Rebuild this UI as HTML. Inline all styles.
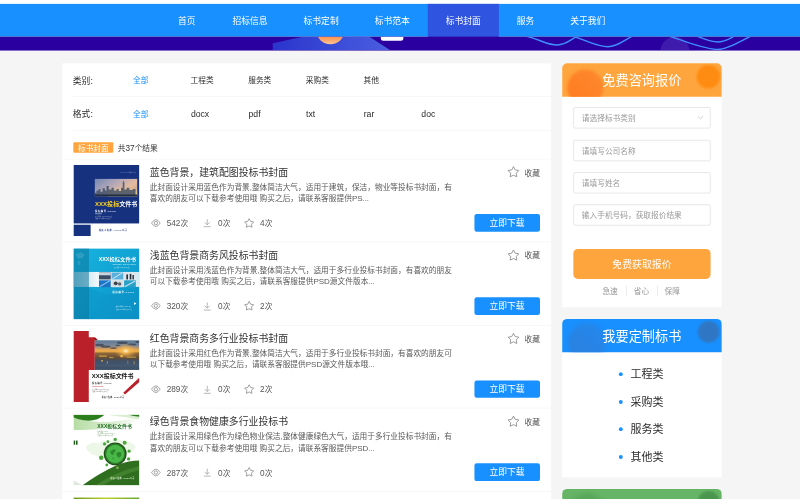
<!DOCTYPE html>
<html lang="zh-CN">
<head>
<meta charset="utf-8">
<title>标书封面</title>
<style>
*{box-sizing:border-box;margin:0;padding:0}
html,body{width:800px;height:499px;overflow:hidden;background:#f5f5f5}
body{font-family:"Liberation Sans","Noto Sans CJK SC",sans-serif;color:#333}
#stage{position:absolute;left:0;top:0;width:1440px;height:899px;transform:scale(0.555556);transform-origin:0 0;background:#f5f5f5;overflow:hidden}
.abs{position:absolute}
#topbar{left:0;top:0;width:1440px;height:7px;background:#fff}
#nav{left:0;top:6.8px;width:1440px;height:59.4px;background:#1890ff}
#nav a{position:absolute;top:0;height:59.8px;line-height:62.5px;color:#fff;font-size:15.8px;text-align:center;text-decoration:none;white-space:nowrap}
#nav a.on{background:#2f54df}
#banner{left:0;top:66.2px;width:1440px;height:24.8px;background:#2a00a0;overflow:hidden}
#main{left:112.1px;top:114.3px;width:880px;height:800px;background:#fff}
.frow{position:absolute;left:19px;width:861px;border-bottom:1px solid #f0f0f0}
.frow span{position:absolute;top:0;line-height:63px;font-size:13.85px;color:#2b2b2b;white-space:nowrap}
.frow span.lb{font-size:15.8px;left:0}
.frow span.on{color:#1890ff}
.frow span.en{font-size:15.600px;margin-left:0.500px}
#tagrow{left:0;top:121.500px;width:880px;height:51px;border-bottom:1px solid #f3f3f3}
#tag{left:19.900px;top:20px;width:72px;height:19.5px;background:#ffa53d;border-radius:2px;color:#fff;font-size:13.85px;line-height:20.5px;text-align:center}
#cnt b{font-weight:400;font-size:14.800px}
#cnt{left:100px;top:20px;font-size:13.85px;line-height:20.5px;color:#333;white-space:nowrap}
.item{position:absolute;left:0;width:880px;height:149.6px;border-bottom:1px solid #f0f0f0}
.item .thumb{position:absolute;left:19.900px;top:10.5px;width:119.500px;height:128px;overflow:hidden}
.item .thumb svg{display:block}
.item h3{position:absolute;left:157.5px;top:10.5px;font-size:17.8px;font-weight:400;line-height:26px;color:#333;white-space:nowrap}
.item p{position:absolute;left:157.5px;top:40.800px;width:600px;font-size:13.85px;line-height:20px;color:#595959;white-space:nowrap}
.item p b{font-weight:400;font-size:14.400px}
.item .st b{font-weight:400;font-size:14.800px}
.item .st{position:absolute;top:105.400px;height:20px;line-height:20px;font-size:13.85px;color:#555;white-space:nowrap}
.item svg.ic{position:absolute;overflow:visible}
.item .fav{position:absolute;left:832px;top:11.300px;font-size:13.85px;line-height:26px;color:#555;white-space:nowrap}
.item .btn{position:absolute;left:741.5px;top:99px;width:118px;height:31.5px;background:#1890ff;border-radius:4px;color:#fff;font-size:15.8px;line-height:32.5px;text-align:center}
.side{position:absolute;left:1011.8px;width:287px;background:#fff}
.shead{position:absolute;left:0;top:0;width:287px;height:60px;border-radius:9px 9px 0 0;overflow:hidden;color:#fff;font-size:23.7px;line-height:63px;text-align:center}
.shead i{position:absolute;border-radius:50%;display:block}
.shead b{position:relative;font-weight:400}
.inp{position:absolute;left:20px;width:247.500px;height:38px;border:1px solid #d4d4d4;border-radius:3px;font-size:13.85px;line-height:39px;color:#999;padding-left:14.5px;white-space:nowrap;background:#fff}
#qbtn{left:20px;top:334px;width:247.500px;height:53.5px;background:#ffa53d;border-radius:8px;color:#fff;font-size:17.8px;line-height:57px;text-align:center}
.slog{position:absolute;top:398.300px;font-size:13.85px;line-height:22px;color:#999;white-space:nowrap}
.sep{position:absolute;top:400px;width:1px;height:18px;background:#ddd}
.li{position:absolute;left:123px;font-size:19.75px;line-height:30px;color:#2b2b2b;white-space:nowrap}
.dot{position:absolute;left:102px;width:7px;height:7px;border-radius:50%;background:#1890ff}
</style>
</head>
<body>
<div id="stage">
<div id="topbar" class="abs"></div>
<div id="nav" class="abs">
<a style="left:288px;width:96px">首页</a>
<a style="left:386px;width:128px">招标信息</a>
<a style="left:514px;width:128px">标书定制</a>
<a style="left:642px;width:128px">标书范本</a>
<a class="on" style="left:770px;width:128px">标书封面</a>
<a style="left:898px;width:96px">服务</a>
<a style="left:994px;width:128px">关于我们</a>
</div>
<div id="banner" class="abs">
<svg width="1440" height="24" viewBox="0 0 1440 24" style="display:block">
<defs><linearGradient id="bp" x1="0" y1="0" x2="1" y2="0"><stop offset="0" stop-color="#2a35cc"/><stop offset="1" stop-color="#4a5ee0"/></linearGradient>
<linearGradient id="bo" gradientUnits="userSpaceOnUse" x1="0" y1="-2" x2="0" y2="14"><stop offset="0" stop-color="#ff8a3d"/><stop offset="1" stop-color="#ffc59a"/></linearGradient></defs>
<polygon points="491,24 491,12 545,0 665,0 702,24" fill="url(#bp)"/>
<circle cx="594.700" cy="-11.700" r="25.400" fill="url(#bo)"/>
<rect x="685.500" y="-8" width="40.500" height="15.500" rx="4.500" fill="#fff"/>
<path d="M947,-1 C975,6 985,15 1003,15 C1020,15 1028,4 1040,-1" fill="none" stroke="#3f8fff" stroke-width="2.600"/>
<path d="M1030,-1 C1060,8 1075,18 1094,18 C1112,18 1124,6 1138,-1" fill="none" stroke="#3f8fff" stroke-width="2.600"/>
<circle cx="1215" cy="26" r="26" fill="#8a80e0" opacity="0.210"/>
<path d="M1204,-1 C1245,12 1270,23 1292,23 C1312,23 1332,8 1352,-1" fill="none" stroke="#3f8fff" stroke-width="2.600"/>
<path d="M1254,-1 C1270,5 1280,9.500 1292,9.500 C1304,9.500 1312,4 1322,-1" fill="none" stroke="#3f8fff" stroke-width="2.600"/>
</svg>
</div>

<div id="main" class="abs">
<div class="frow" style="top:0;height:60px">
<span class="lb">类别:</span>
<span class="on" style="left:108.3px">全部</span>
<span style="left:212.0px">工程类</span>
<span style="left:315.7px">服务类</span>
<span style="left:419.4px">采购类</span>
<span style="left:523.1px">其他</span>
</div>
<div class="frow" style="top:60px;height:61.500px">
<span class="lb">格式:</span>
<span class="on" style="left:108.3px">全部</span>
<span style="left:212.0px" class="en">docx</span>
<span style="left:315.7px" class="en">pdf</span>
<span style="left:419.4px" class="en">txt</span>
<span style="left:523.1px" class="en">rar</span>
<span style="left:626.8px" class="en">doc</span>
</div>
<div id="tagrow" class="abs">
<div id="tag" class="abs">标书封面</div>
<div id="cnt" class="abs">共<b>37</b>个结果</div>
</div>
<div class="item" style="top:172.2px">
<div class="thumb"><svg width="119.500" height="128" viewBox="0 0 119 128" preserveAspectRatio="none">
<defs>
<linearGradient id="sky1" x1="0" y1="0" x2="1" y2="0.600"><stop offset="0" stop-color="#7288b4"/><stop offset="0.450" stop-color="#b4a8b8"/><stop offset="0.800" stop-color="#e6bca0"/><stop offset="1" stop-color="#c9a58e"/></linearGradient>
<linearGradient id="gl1" x1="0" y1="0" x2="0" y2="1"><stop offset="0" stop-color="#f2d28a" stop-opacity="0"/><stop offset="0.600" stop-color="#f2d28a" stop-opacity="0.550"/><stop offset="1" stop-color="#e8c070" stop-opacity="0.900"/></linearGradient>
</defs>
<rect width="119" height="128" fill="#fff"/>
<rect width="119" height="105.200" fill="#16327f"/>
<rect x="0" y="107.500" width="31" height="20.500" fill="#16327f"/>
<rect x="38.500" y="25" width="76" height="31.300" fill="url(#sky1)"/>
<rect x="62" y="40" width="52.500" height="16.300" fill="url(#gl1)"/>
<path d="M38.500,56.300 V50 h3 v-4 h4 v-3 h3 v5 h4 v-6 h4 v4 h3 v-8 h4 v6 h5 v-3 h4 v5 h5 v-3 h4 v4 h4 v-6 h3 v-9 l1.500,-4 l1.500,4 v12 h4 v-3 h5 v4 h6 v-2 h5 V56.300 Z" fill="#3a4a63" opacity="0.800"/>
<path d="M38.500,56.300 V53 h76 V56.300 Z" fill="#1f2c44"/>
<text x="39" y="74.500" font-family="'Liberation Sans','Noto Sans CJK SC',sans-serif" font-size="10" font-weight="700" fill="#ffd21f" textLength="75.500" lengthAdjust="spacingAndGlyphs">XXX投标<tspan fill="#fff">文件书</tspan></text>
<text x="39" y="84" font-family="'Liberation Sans','Noto Sans CJK SC',sans-serif" font-size="4.200" font-weight="700" fill="#fff" letter-spacing="1">投标编号:XXXX</text>
<rect x="39" y="87.500" width="12" height="0.900" fill="#fff"/>
<text x="39" y="94" font-family="'Liberation Sans','Noto Sans CJK SC',sans-serif" font-size="2.600" fill="#c8d0e8">项目名称: XXXXXXXX项目</text>
<text x="39" y="97.500" font-family="'Liberation Sans','Noto Sans CJK SC',sans-serif" font-size="2.600" fill="#c8d0e8">日期: XXXX年XX月XX日</text>
<text x="84" y="14" font-family="'Liberation Sans','Noto Sans CJK SC',sans-serif" font-size="3" fill="#8f9fd0">XXXXXXXX有限公司</text>
<text x="46" y="119.500" font-family="'Liberation Sans','Noto Sans CJK SC',sans-serif" font-size="3.800" font-weight="700" fill="#16327f" letter-spacing="0.900">投标人名称: XXXX公司</text>
</svg></div>
<h3>蓝色背景，建筑配图投标书封面</h3>
<p>此封面设计采用蓝色作为背景,整体简洁大气，适用于建筑，保洁，物业等投标书封面，有<br>喜欢的朋友可以下载参考使用哦 购买之后，请联系客服提供<b>PS</b>...</p>
<svg class="ic" style="left:160px;top:107.4px" width="17" height="15" viewBox="0 0 17 15"><path d="M0.700,7.500 Q8.500,-4.700 16.300,7.500 Q8.500,19.700 0.700,7.500 Z" fill="none" stroke="#858585" stroke-width="1.300"/><circle cx="8.500" cy="7.500" r="3" fill="none" stroke="#858585" stroke-width="1.300"/></svg><span class="st" style="left:188px"><b>542</b>次</span>
<svg class="ic" style="left:253.5px;top:107.9px" width="14" height="15" viewBox="0 0 14 15"><path d="M7,0.500 V10.500 M2.500,6.300 L7,10.800 L11.500,6.300 M0.800,14 H13.200" fill="none" stroke="#9a9a9a" stroke-width="1.300"/></svg><span class="st" style="left:280.500px"><b>0</b>次</span>
<svg class="ic" style="left:326.5px;top:105.2px" width="19" height="19" viewBox="0 0 20 20"><path d="M10.00,1.70 L12.76,6.90 L18.56,7.92 L14.47,12.15 L15.29,17.98 L10.00,15.40 L4.71,17.98 L5.53,12.15 L1.44,7.92 L7.24,6.90 Z" fill="none" stroke="#858585" stroke-width="1.45" stroke-linejoin="round"/></svg><span class="st" style="left:356px"><b>4</b>次</span>
<svg class="ic" style="left:801px;top:12px" width="22.5" height="22.5" viewBox="0 0 20 20"><path d="M10.00,1.70 L12.76,6.90 L18.56,7.92 L14.47,12.15 L15.29,17.98 L10.00,15.40 L4.71,17.98 L5.53,12.15 L1.44,7.92 L7.24,6.90 Z" fill="none" stroke="#858585" stroke-width="1.3" stroke-linejoin="round"/></svg><span class="fav">收藏</span>
<div class="btn">立即下载</div>
</div>
<div class="item" style="top:321.8px">
<div class="thumb"><svg width="119.500" height="128" viewBox="0 0 119 128" preserveAspectRatio="none">
<defs>
<linearGradient id="cy2" x1="0" y1="0" x2="1" y2="1"><stop offset="0" stop-color="#19b4e0"/><stop offset="0.5" stop-color="#10a3d3"/><stop offset="1" stop-color="#0a8cc2"/></linearGradient>
<linearGradient id="bd2" x1="0" y1="0" x2="1" y2="0"><stop offset="0" stop-color="#9fd4e6"/><stop offset="0.35" stop-color="#eef6f9"/><stop offset="1" stop-color="#d5ebf2"/></linearGradient>
</defs>
<rect width="119" height="128" fill="url(#cy2)"/>
<path d="M27,70 Q70,95 119,72 V128 H27 Z" fill="#0b93c8" opacity="0.5"/>
<rect x="0" y="42.500" width="119" height="27" fill="url(#bd2)"/>
<rect x="0" y="0" width="28" height="128" fill="#0a7298" opacity="0.520"/>
<path d="M4,10 l10,-3 l6,4 l-3,6 l-7,2 l-4,-4 Z M8,22 l5,2 l-1,7 l-4,-3 Z" fill="#fff" opacity="0.12"/>
<rect x="46" y="43.5" width="21" height="12.5" fill="#3a4c66"/><rect x="46" y="43.500" width="21" height="5" fill="#c9d3dd"/>
<rect x="68.500" y="43.500" width="21" height="12.500" fill="#5ab0dc"/><path d="M70,55 L88,44" stroke="#e8f4fa" stroke-width="1.500"/>
<rect x="91" y="43.500" width="21" height="12.500" fill="#dfe6ea"/><rect x="95" y="47" width="3" height="9" fill="#26303c"/><rect x="101" y="46" width="3" height="10" fill="#26303c"/><rect x="106" y="48" width="2.500" height="8" fill="#26303c"/>
<rect x="46" y="57.500" width="21" height="12.500" fill="#1d74c4"/><path d="M47,69 L66,58" stroke="#7fc0ee" stroke-width="2"/>
<rect x="68.500" y="57.500" width="21" height="12.500" fill="#d9dfe2"/><circle cx="76" cy="63" r="3.500" fill="#39424d"/><circle cx="83" cy="64" r="3" fill="#59626c"/>
<rect x="91" y="57.500" width="21" height="12.500" fill="#2aa0c8"/><path d="M92,69 L111,59" stroke="#bfe6f2" stroke-width="2"/>
<text x="45.500" y="23" font-family="'Liberation Sans','Noto Sans CJK SC',sans-serif" font-size="8.600" font-weight="700" fill="#fff" textLength="67" lengthAdjust="spacingAndGlyphs">XXX投标文件书</text>
<text x="70" y="30" font-family="'Liberation Sans',sans-serif" font-size="3.400" fill="#e4f4fa" textLength="42.500">TENDER DOCUMENT</text>
<text x="70" y="35.500" font-family="'Liberation Sans','Noto Sans CJK SC',sans-serif" font-size="2.400" fill="#d4eef7">— 项目名称: XXXXXXXX项目 —</text>
<text x="70" y="81" font-family="'Liberation Sans','Noto Sans CJK SC',sans-serif" font-size="4.200" font-weight="700" fill="#fff" letter-spacing="1.200">投标编号:XXXX</text>
<path d="M109,97 l4,2.500 l-4,2.500 Z" fill="#fff"/>
<text x="76" y="106.500" font-family="'Liberation Sans','Noto Sans CJK SC',sans-serif" font-size="2.600" fill="#e4f4fa">投标人名称: XXXX公司</text>
<text x="76" y="111" font-family="'Liberation Sans','Noto Sans CJK SC',sans-serif" font-size="2.600" fill="#e4f4fa">日期: XXXX年XX月XX日</text>
</svg></div>
<h3>浅蓝色背景商务风投标书封面</h3>
<p>此封面设计采用浅蓝色作为背景,整体简洁大气，适用于多行业投标书封面，有喜欢的朋友<br>可以下载参考使用哦 购买之后，请联系客服提供<b>PSD</b>源文件版本...</p>
<svg class="ic" style="left:160px;top:107.4px" width="17" height="15" viewBox="0 0 17 15"><path d="M0.700,7.500 Q8.500,-4.700 16.300,7.500 Q8.500,19.700 0.700,7.500 Z" fill="none" stroke="#858585" stroke-width="1.300"/><circle cx="8.500" cy="7.500" r="3" fill="none" stroke="#858585" stroke-width="1.300"/></svg><span class="st" style="left:188px"><b>320</b>次</span>
<svg class="ic" style="left:253.5px;top:107.9px" width="14" height="15" viewBox="0 0 14 15"><path d="M7,0.500 V10.500 M2.500,6.300 L7,10.800 L11.500,6.300 M0.800,14 H13.200" fill="none" stroke="#9a9a9a" stroke-width="1.300"/></svg><span class="st" style="left:280.500px"><b>0</b>次</span>
<svg class="ic" style="left:326.5px;top:105.2px" width="19" height="19" viewBox="0 0 20 20"><path d="M10.00,1.70 L12.76,6.90 L18.56,7.92 L14.47,12.15 L15.29,17.98 L10.00,15.40 L4.71,17.98 L5.53,12.15 L1.44,7.92 L7.24,6.90 Z" fill="none" stroke="#858585" stroke-width="1.45" stroke-linejoin="round"/></svg><span class="st" style="left:356px"><b>2</b>次</span>
<svg class="ic" style="left:801px;top:12px" width="22.5" height="22.5" viewBox="0 0 20 20"><path d="M10.00,1.70 L12.76,6.90 L18.56,7.92 L14.47,12.15 L15.29,17.98 L10.00,15.40 L4.71,17.98 L5.53,12.15 L1.44,7.92 L7.24,6.90 Z" fill="none" stroke="#858585" stroke-width="1.3" stroke-linejoin="round"/></svg><span class="fav">收藏</span>
<div class="btn">立即下载</div>
</div>
<div class="item" style="top:471.4px">
<div class="thumb"><svg width="119.500" height="128" viewBox="0 0 119 128" preserveAspectRatio="none">
<defs>
<linearGradient id="sk3" x1="0" y1="0" x2="0" y2="1"><stop offset="0" stop-color="#5f7a98"/><stop offset="0.180" stop-color="#7d8797"/><stop offset="0.300" stop-color="#d9a05a"/><stop offset="0.370" stop-color="#f3b24a"/><stop offset="0.440" stop-color="#8e6636"/><stop offset="0.600" stop-color="#5f4c36"/><stop offset="0.700" stop-color="#3f5068"/><stop offset="1" stop-color="#4a6078"/></linearGradient>
<radialGradient id="sun3" cx="0.690" cy="0.360" r="0.260"><stop offset="0" stop-color="#fff6d8"/><stop offset="0.300" stop-color="#fbbf55" stop-opacity="0.850"/><stop offset="1" stop-color="#f0a23c" stop-opacity="0"/></radialGradient>
<filter id="bl3" x="-20%" y="-50%" width="140%" height="200%"><feGaussianBlur stdDeviation="0.700"/></filter>
</defs>
<rect width="119" height="128" fill="#fff"/>
<path d="M0,0 H27.700 V11 H38.500 L44,16.500 H38.500 V69.800 H27.700 V128 H0 Z" fill="#b9202a"/>
<path d="M38.500,11 L44,16.500 H38.500 Z" fill="#8a181e"/>
<rect x="38.500" y="16.500" width="80.500" height="53.300" fill="url(#sk3)"/>
<g fill="#2c3344" opacity="0.620" filter="url(#bl3)">
<ellipse cx="47" cy="25" rx="8" ry="2.200"/><ellipse cx="58" cy="28" rx="9" ry="2"/><ellipse cx="72" cy="30.500" rx="6" ry="1.600"/>
<ellipse cx="88" cy="21" rx="10" ry="2.400"/><ellipse cx="105" cy="24" rx="8" ry="1.800"/><ellipse cx="115" cy="19.500" rx="4" ry="1.800"/><ellipse cx="80" cy="26" rx="5" ry="1.400"/>
</g>
<rect x="38.500" y="16.500" width="80.500" height="53.300" fill="url(#sun3)"/>
<g fill="#f7c24f" opacity="0.750" filter="url(#bl3)"><rect x="46" y="44" width="14" height="2"/><rect x="64" y="47" width="8" height="1.500"/><rect x="84" y="43" width="5" height="4"/><rect x="96" y="46" width="16" height="1.600"/><rect x="50" y="52" width="3" height="3"/><rect x="108" y="54" width="2" height="6" opacity="0.600"/><rect x="60" y="54" width="2" height="5" opacity="0.600"/><rect x="97" y="53" width="1.500" height="6" opacity="0.600"/></g>
<rect x="38.500" y="64" width="80.500" height="5.800" fill="#3d4e63" opacity="0.700"/>
<text x="33" y="84.800" font-family="'Liberation Sans','Noto Sans CJK SC',sans-serif" font-size="10.500" font-weight="700" fill="#151515" textLength="75" lengthAdjust="spacingAndGlyphs">XXX投标文件书</text>
<text x="33.500" y="95.500" font-family="'Liberation Sans','Noto Sans CJK SC',sans-serif" font-size="4" font-weight="700" fill="#333" letter-spacing="0.900">投标编号:XXXX</text>
<rect x="33.500" y="99" width="20" height="0.800" fill="#c9434b"/>
<text x="33.500" y="105.500" font-family="'Liberation Sans','Noto Sans CJK SC',sans-serif" font-size="2.600" fill="#444">项目名称: XXXXXXXX项目</text>
<text x="33.500" y="109" font-family="'Liberation Sans','Noto Sans CJK SC',sans-serif" font-size="2.600" fill="#444">日期: XXXX年XX月XX日</text>
<path d="M119,83 V91 L92.500,114 L89.500,111 Z" fill="#b9202a"/>
<text x="51" y="121" font-family="'Liberation Sans','Noto Sans CJK SC',sans-serif" font-size="3.400" font-weight="700" fill="#222" letter-spacing="0.400">投标人名称: XXXX公司</text>
</svg></div>
<h3>红色背景商务多行业投标书封面</h3>
<p>此封面设计采用红色作为背景,整体简洁大气，适用于多行业投标书封面，有喜欢的朋友可<br>以下载参考使用哦 购买之后，请联系客服提供<b>PSD</b>源文件版本哦...</p>
<svg class="ic" style="left:160px;top:107.4px" width="17" height="15" viewBox="0 0 17 15"><path d="M0.700,7.500 Q8.500,-4.700 16.300,7.500 Q8.500,19.700 0.700,7.500 Z" fill="none" stroke="#858585" stroke-width="1.300"/><circle cx="8.500" cy="7.500" r="3" fill="none" stroke="#858585" stroke-width="1.300"/></svg><span class="st" style="left:188px"><b>289</b>次</span>
<svg class="ic" style="left:253.5px;top:107.9px" width="14" height="15" viewBox="0 0 14 15"><path d="M7,0.500 V10.500 M2.500,6.300 L7,10.800 L11.500,6.300 M0.800,14 H13.200" fill="none" stroke="#9a9a9a" stroke-width="1.300"/></svg><span class="st" style="left:280.500px"><b>0</b>次</span>
<svg class="ic" style="left:326.5px;top:105.2px" width="19" height="19" viewBox="0 0 20 20"><path d="M10.00,1.70 L12.76,6.90 L18.56,7.92 L14.47,12.15 L15.29,17.98 L10.00,15.40 L4.71,17.98 L5.53,12.15 L1.44,7.92 L7.24,6.90 Z" fill="none" stroke="#858585" stroke-width="1.45" stroke-linejoin="round"/></svg><span class="st" style="left:356px"><b>2</b>次</span>
<svg class="ic" style="left:801px;top:12px" width="22.5" height="22.5" viewBox="0 0 20 20"><path d="M10.00,1.70 L12.76,6.90 L18.56,7.92 L14.47,12.15 L15.29,17.98 L10.00,15.40 L4.71,17.98 L5.53,12.15 L1.44,7.92 L7.24,6.90 Z" fill="none" stroke="#858585" stroke-width="1.3" stroke-linejoin="round"/></svg><span class="fav">收藏</span>
<div class="btn">立即下载</div>
</div>
<div class="item" style="top:621.0px">
<div class="thumb"><svg width="119.500" height="128" viewBox="0 0 119 128" preserveAspectRatio="none">
<defs>
<linearGradient id="lg4" x1="0" y1="0" x2="1" y2="0"><stop offset="0" stop-color="#a9d694"/><stop offset="0.7" stop-color="#dff0d6"/><stop offset="1" stop-color="#ffffff"/></linearGradient>
</defs>
<rect width="119" height="128" fill="#fff"/>
<path d="M0,3 Q40,24 119,4 V12 Q60,30 0,28 Z" fill="url(#lg4)" opacity="0.850"/><path d="M56,0 H119 V9 Q90,4 56,0 Z" fill="#cfe8c5" opacity="0.800"/>
<path d="M0,0 H56.500 Q44,11 27,11.300 Q10,10 0,5 Z" fill="#2c7d1c"/>
<path d="M97.500,0 H119 V4 Q108,3.500 97.500,0 Z" fill="#2c7d1c"/>
<path d="M22,58 q10,-10 24,-6 q8,-8 22,-4 q14,-6 26,0 q12,2 18,10 q-6,12 -18,14 q-10,8 -26,4 q-16,6 -28,-2 q-14,-4 -18,-16 Z" fill="#e4f3dc" opacity="0.650"/>
<text x="43" y="25" font-family="'Liberation Sans','Noto Sans CJK SC',sans-serif" font-size="8.800" font-weight="700" fill="#1f6b1f" textLength="62" lengthAdjust="spacingAndGlyphs">XXX投标文件书</text>
<text x="43.500" y="31.500" font-family="'Liberation Sans','Noto Sans CJK SC',sans-serif" font-size="2.600" fill="#3a7a3a">投标编号: XXXX</text>
<text x="43.500" y="35" font-family="'Liberation Sans','Noto Sans CJK SC',sans-serif" font-size="2.600" fill="#3a7a3a">项目名称: XXXXXXXX项目</text>
<text x="43.500" y="38.500" font-family="'Liberation Sans','Noto Sans CJK SC',sans-serif" font-size="2.600" fill="#3a7a3a">日期: XXXX年XX月XX日</text>
<rect x="0" y="47" width="3" height="7.500" fill="#1f5a1a"/><rect x="4.500" y="47" width="3" height="7.500" fill="#1f5a1a"/>
<g fill="#4aa53a">
<circle cx="50" cy="78" r="4"/><circle cx="56" cy="53" r="3"/><circle cx="62" cy="49" r="2.500"/><circle cx="75" cy="45" r="3"/><circle cx="92" cy="51" r="3.500"/><circle cx="100" cy="66" r="3"/><circle cx="99" cy="80" r="3"/><circle cx="60" cy="91" r="2.500"/>
</g>
<path d="M0,128 L0,118 L16,128 Z" fill="#dfe8dc"/><path d="M16,128 Q44,107 78.500,91 Q100,83 119,83 V128 Z" fill="#2f6e1e"/>
<path d="M39,128 Q75,104 119,93 V100 Q82,110 52,128 Z" fill="#5c9a40" opacity="0.450"/>
<circle cx="75" cy="71" r="20.500" fill="#1d4f17"/>
<circle cx="75" cy="71" r="18.500" fill="#2f7a26"/>
<circle cx="75" cy="71" r="16.300" fill="#49b848"/>
<path d="M66,68 q3,-6 9,-5 q2,3 -1,5 q-3,1 -2,4 q-3,3 -6,-4 Z M77,70 q5,-4 9,-1 q1,6 -4,9 q-4,-1 -5,-8 Z M70,77 q3,1 3,4 q-3,1 -3,-4 Z" fill="#2c8a2c"/>
<circle cx="79" cy="96" r="2.500" fill="#7fae4a"/>
<text x="66.500" y="116.500" font-family="'Liberation Sans','Noto Sans CJK SC',sans-serif" font-size="3.600" font-weight="700" fill="#e8f5e0" letter-spacing="0.500">投标人名称: XXXX公司</text>
</svg></div>
<h3>绿色背景食物健康多行业投标书</h3>
<p>此封面设计采用绿色作为绿色物业保洁,整体健康绿色大气，适用于多行业投标书封面，有<br>喜欢的朋友可以下载参考使用哦 购买之后，请联系客服提供<b>PSD</b>...</p>
<svg class="ic" style="left:160px;top:107.4px" width="17" height="15" viewBox="0 0 17 15"><path d="M0.700,7.500 Q8.500,-4.700 16.300,7.500 Q8.500,19.700 0.700,7.500 Z" fill="none" stroke="#858585" stroke-width="1.300"/><circle cx="8.500" cy="7.500" r="3" fill="none" stroke="#858585" stroke-width="1.300"/></svg><span class="st" style="left:188px"><b>287</b>次</span>
<svg class="ic" style="left:253.5px;top:107.9px" width="14" height="15" viewBox="0 0 14 15"><path d="M7,0.500 V10.500 M2.500,6.300 L7,10.800 L11.500,6.300 M0.800,14 H13.200" fill="none" stroke="#9a9a9a" stroke-width="1.300"/></svg><span class="st" style="left:280.500px"><b>0</b>次</span>
<svg class="ic" style="left:326.5px;top:105.2px" width="19" height="19" viewBox="0 0 20 20"><path d="M10.00,1.70 L12.76,6.90 L18.56,7.92 L14.47,12.15 L15.29,17.98 L10.00,15.40 L4.71,17.98 L5.53,12.15 L1.44,7.92 L7.24,6.90 Z" fill="none" stroke="#858585" stroke-width="1.45" stroke-linejoin="round"/></svg><span class="st" style="left:356px"><b>0</b>次</span>
<svg class="ic" style="left:801px;top:12px" width="22.5" height="22.5" viewBox="0 0 20 20"><path d="M10.00,1.70 L12.76,6.90 L18.56,7.92 L14.47,12.15 L15.29,17.98 L10.00,15.40 L4.71,17.98 L5.53,12.15 L1.44,7.92 L7.24,6.90 Z" fill="none" stroke="#858585" stroke-width="1.3" stroke-linejoin="round"/></svg><span class="fav">收藏</span>
<div class="btn">立即下载</div>
</div>
<div class="item" style="top:770.6px"><div class="thumb"><svg width="119.500" height="128" viewBox="0 0 119 128" preserveAspectRatio="none"><defs><linearGradient id="g5" x1="0" y1="0" x2="1" y2="0"><stop offset="0" stop-color="#6f9a1c"/><stop offset="0.5" stop-color="#b9cf2a"/><stop offset="1" stop-color="#5fa52a"/></linearGradient></defs><rect width="119" height="128" fill="url(#g5)"/></svg></div></div>
</div>

<div class="side" style="top:114.3px;height:439px;border-radius:9px 9px 0 0">
<div class="shead" style="background:#ffa53d">
<i style="left:9.500px;top:11px;width:65px;height:65px;background:linear-gradient(45deg,#ff7a1f,#ff8a2e);filter:blur(3px)"></i>
<i style="left:242.500px;top:3px;width:42px;height:42px;background:#ff8c12;filter:blur(1.500px)"></i>
<b>免费咨询报价</b>
</div>
<div class="inp" style="top:79px">请选择标书类别<svg style="position:absolute;left:222px;top:14px" width="12" height="8" viewBox="0 0 12 8"><path d="M1,1 L6,6 L11,1" fill="none" stroke="#bfbfbf" stroke-width="1.300"/></svg></div>
<div class="inp" style="top:137.500px">请填写公司名称</div>
<div class="inp" style="top:196px">请填写姓名</div>
<div class="inp" style="top:254px">输入手机号码，获取报价结果</div>
<div id="qbtn" class="abs">免费获取报价</div>
<span class="slog" style="left:72.500px">急速</span><i class="sep" style="left:115px"></i>
<span class="slog" style="left:129px">省心</span><i class="sep" style="left:171px"></i>
<span class="slog" style="left:184.500px">保障</span>
</div>
<div class="side" style="top:573.6px;height:285.200px;border-radius:9px 9px 0 0">
<div class="shead" style="background:#1890ff">
<i style="left:10px;top:8px;width:70px;height:70px;background:linear-gradient(45deg,#2a80dc,#2488ee);filter:blur(4px)"></i>
<i style="left:244px;top:4.500px;width:39px;height:39px;background:#2f77c4;filter:blur(1.500px)"></i>
<b>我要定制标书</b>
</div>
<i class="dot" style="top:96.8px"></i><span class="li" style="top:85.3px">工程类</span>
<i class="dot" style="top:146.2px"></i><span class="li" style="top:134.7px">采购类</span>
<i class="dot" style="top:195.6px"></i><span class="li" style="top:184.1px">服务类</span>
<i class="dot" style="top:245.0px"></i><span class="li" style="top:233.5px">其他类</span>
</div>
<div class="side" style="top:879.8px;height:60px;border-radius:9px 9px 0 0">
<div class="shead" style="background:#66b566">
<i style="left:10px;top:8px;width:70px;height:70px;background:#58a65a;filter:blur(4px)"></i>
<i style="left:244px;top:4.500px;width:39px;height:39px;background:#4a964e;filter:blur(1.500px)"></i>
<b>热门标书封面</b>
</div>
</div>

</div>
</body>
</html>
